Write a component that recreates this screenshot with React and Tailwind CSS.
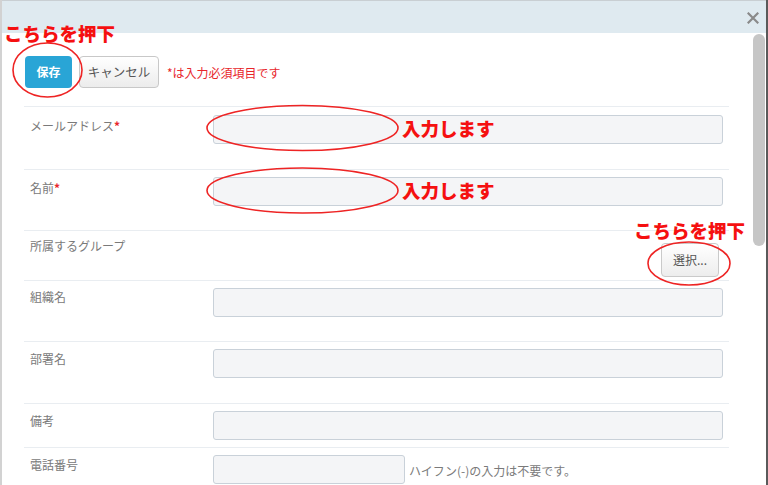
import React from 'react';

const inputCls = 'h-[29px] bg-[#f4f5f7] border border-[#c9d1d9] rounded-[3px]';

const FieldRow = ({ label, required, h, pt, labelPt, children }) => (
  <div className={`flex border-t border-[#e9edf1] ${h}`}>
    <div className={`w-[189px] pl-[6px] text-[12px] leading-[16px] text-[#7a7a7a] ${labelPt}`}>
      {label}
      {required && <span className="text-[#e8262b] font-bold">*</span>}
    </div>
    <div className={`flex-1 ${pt}`}>{children}</div>
  </div>
);

const Note = ({ className, children }) => (
  <span className={`absolute text-[18.5px] leading-none font-black text-[#f51010] whitespace-nowrap ${className}`}>
    {children}
  </span>
);

export default function App() {
  return (
    <div className="relative w-[768px] h-[485px] overflow-hidden bg-white flex font-['Noto_Sans_CJK_JP',sans-serif]">
      <div className="w-[2px] bg-[#d2d2d2]" />
      <div className="flex-1 flex flex-col min-w-0">
        {/* header */}
        <div className="h-[33px] shrink-0 bg-[#dfeaf0] border-t border-[#c9cfd3] flex items-center justify-end pr-[7px]">
          <svg width="12" height="12" viewBox="0 0 12 12" className="mt-[1px]">
            <path d="M1.5 1.5 L10.5 10.5 M10.5 1.5 L1.5 10.5" stroke="#8a8a8a" strokeWidth="2.2" strokeLinecap="square" />
          </svg>
        </div>

        <div className="flex flex-1 min-h-0">
          <div className="flex-1 pl-[22px] pr-[23px]">
            {/* toolbar */}
            <div className="h-[73px] flex items-start pt-[23px] pl-[1px]">
              <button className="h-[32px] w-[47px] rounded-[4px] bg-[#29a5d6] text-white text-[12px] font-bold">
                保存
              </button>
              <button className="ml-[7px] h-[32px] w-[80px] rounded-[4px] border border-[#c8c8c8] bg-gradient-to-b from-white to-[#ececec] text-[#555] text-[12.5px]">
                キャンセル
              </button>
              <span className="ml-[8px] mt-[8px] text-[12px] text-[#e8262b]">*は入力必須項目です</span>
            </div>

            <FieldRow label="メールアドレス" required h="h-[63px]" pt="pt-[8px]" labelPt="pt-[11px]">
              <div className={`${inputCls} w-[510px]`} />
            </FieldRow>
            <FieldRow label="名前" required h="h-[61px]" pt="pt-[7px]" labelPt="pt-[10px]">
              <div className={`${inputCls} w-[510px]`} />
            </FieldRow>
            <div className="flex border-t border-[#e9edf1] h-[50px]">
              <div className="w-[189px] pl-[6px] pt-[7px] text-[12px] leading-[16px] text-[#7a7a7a]">所属するグループ</div>
              <div className="flex-1 flex justify-end pt-[12px] pr-[10px]">
                <button className="h-[34px] w-[58px] rounded-[4px] border border-[#cacaca] bg-gradient-to-b from-white to-[#ededed] text-[#555] text-[12px]">
                  選択...
                </button>
              </div>
            </div>
            <FieldRow label="組織名" h="h-[61px]" pt="pt-[7px]" labelPt="pt-[8px]">
              <div className={`${inputCls} w-[510px]`} />
            </FieldRow>
            <FieldRow label="部署名" h="h-[62px]" pt="pt-[7px]" labelPt="pt-[9px]">
              <div className={`${inputCls} w-[510px]`} />
            </FieldRow>
            <FieldRow label="備考" h="h-[44px]" pt="pt-[7px]" labelPt="pt-[9px]">
              <div className={`${inputCls} w-[510px]`} />
            </FieldRow>
            <FieldRow label="電話番号" h="h-[60px]" pt="pt-[7px]" labelPt="pt-[9px]">
              <div className="flex items-center">
                <div className={`${inputCls} w-[192px]`} />
                <span className="ml-[4px] mt-[2px] text-[12px] text-[#7a7a7a]">ハイフン(-)の入力は不要です。</span>
              </div>
            </FieldRow>
          </div>

          {/* scrollbar */}
          <div className="w-[14px] shrink-0 pt-[1px] flex justify-center">
            <div className="w-[12px] h-[212px] rounded-full bg-[#c6c6c6]" />
          </div>
        </div>
      </div>
      <div className="w-[2px] bg-[#5a5a5a]" />

      {/* annotations */}
      <svg className="absolute inset-0 pointer-events-none" width="768" height="485">
        <g fill="none" stroke="#ee2424" strokeWidth="1.6">
          <ellipse cx="47.5" cy="70" rx="34.5" ry="27" />
          <ellipse cx="302.5" cy="128" rx="95.5" ry="22.5" />
          <ellipse cx="302.5" cy="190.5" rx="95.5" ry="22.5" />
          <ellipse cx="689" cy="263.5" rx="41" ry="21.5" />
        </g>
      </svg>
      <Note className="left-[4px] top-[24px]">こちらを押下</Note>
      <Note className="left-[402px] top-[119px]">入力します</Note>
      <Note className="left-[402px] top-[181px]">入力します</Note>
      <Note className="left-[634px] top-[221px]">こちらを押下</Note>
    </div>
  );
}
